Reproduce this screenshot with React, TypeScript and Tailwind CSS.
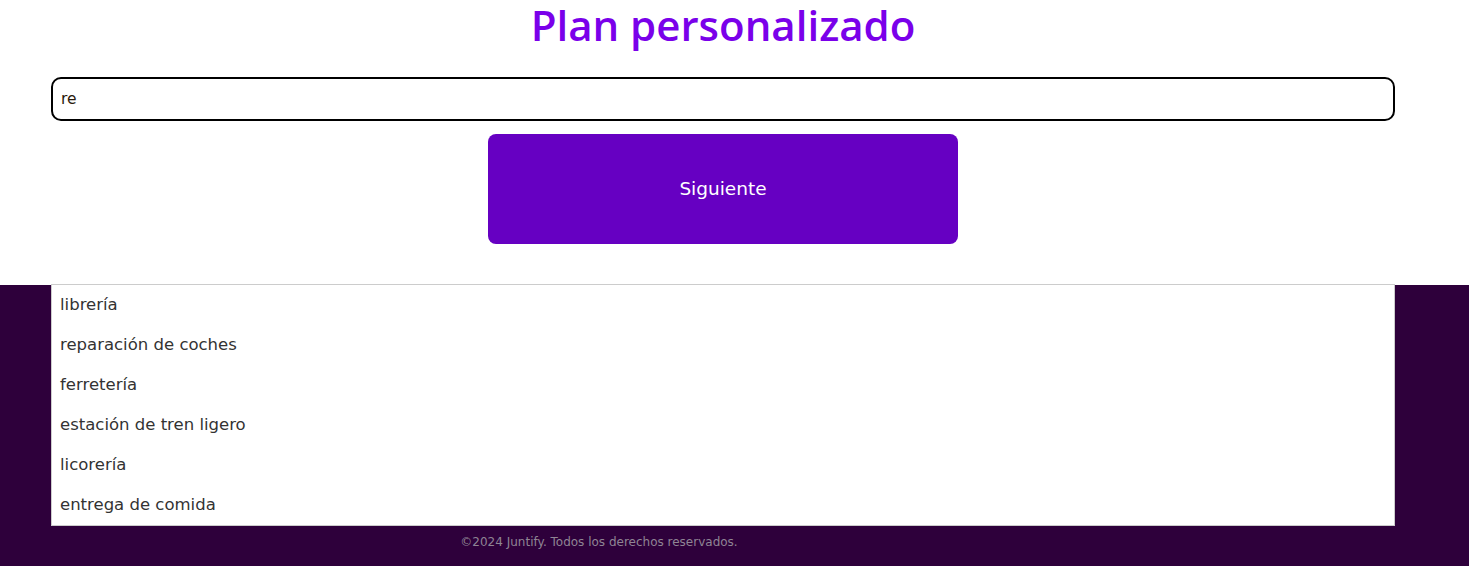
import React, { useState } from 'react';

const suggestions = [
  'librería',
  'reparación de coches',
  'ferretería',
  'estación de tren ligero',
  'licorería',
  'entrega de comida',
];

const App: React.FC = () => {
  const [query, setQuery] = useState('re');

  return (
    <div className="min-h-screen bg-[#2e003b] font-['DejaVu_Sans',sans-serif]">
      {/* Form section */}
      <div className="relative bg-white h-[285px]">
        <div className="w-[1446px]">
          <h1 className="pt-[1px] text-center font-['Open_Sans',sans-serif] text-[42px] leading-[48px] font-semibold text-[#7a00ea]">
            Plan personalizado
          </h1>

          <div className="mt-[28px] px-[51px]">
            <input
              autoFocus
              value={query}
              onChange={(e) => setQuery(e.target.value)}
              className="w-[1344px] h-[44px] px-[8px] rounded-[10px] border-2 border-black text-[15.5px] text-[#2a1a0a] outline-none"
            />
          </div>

          <div className="mt-[13px] flex justify-center">
            <button className="w-[470px] h-[110px] rounded-[8px] bg-[#6600c2] text-white text-[18.5px]">
              Siguiente
            </button>
          </div>
        </div>

        {/* Autocomplete dropdown */}
        <ul className="absolute z-10 left-[51px] top-[284px] w-[1344px] bg-white border border-[#cccccc]">
          {suggestions.map((s) => (
            <li key={s} className="h-[40px] px-[8px] flex items-center text-[16.5px] text-[#333333]">
              {s}
            </li>
          ))}
        </ul>
      </div>

      {/* Footer */}
      <footer className="h-[281px]">
        <p className="w-[1198px] pt-[248px] text-center text-[12px] text-[#8f8494]">
          ©2024 Juntify. Todos los derechos reservados.
        </p>
      </footer>
    </div>
  );
};

export default App;
